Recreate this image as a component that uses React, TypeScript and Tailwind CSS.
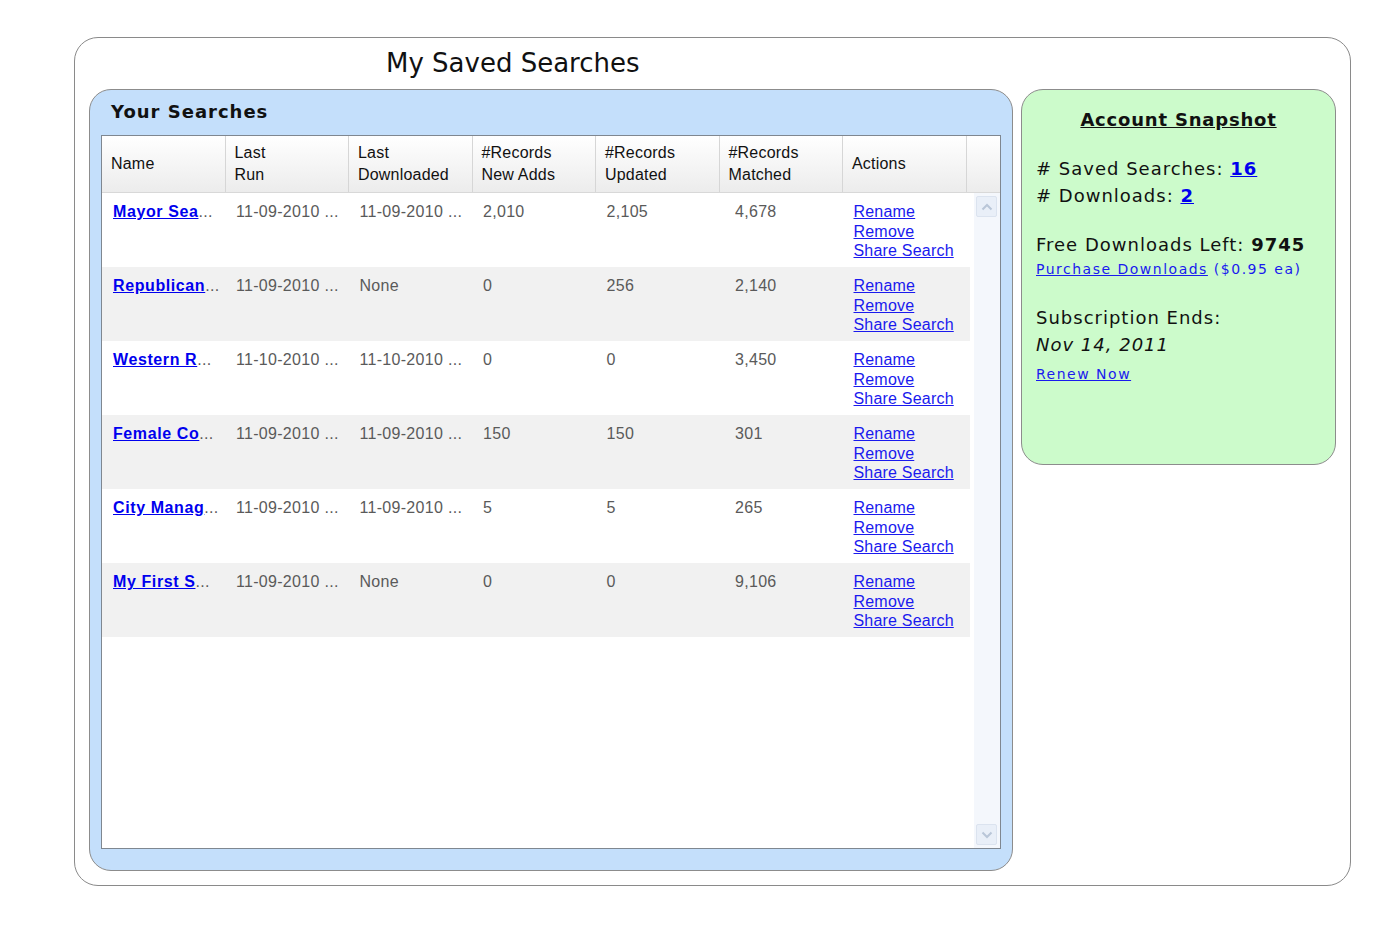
const rows = [
  { name: 'Mayor Sea', run: '11-09-2010 ...', dl: '11-09-2010 ...', adds: '2,010', upd: '2,105', match: '4,678' },
  { name: 'Republican', run: '11-09-2010 ...', dl: 'None', adds: '0', upd: '256', match: '2,140' },
  { name: 'Western R', run: '11-10-2010 ...', dl: '11-10-2010 ...', adds: '0', upd: '0', match: '3,450' },
  { name: 'Female Co', run: '11-09-2010 ...', dl: '11-09-2010 ...', adds: '150', upd: '150', match: '301' },
  { name: 'City Manag', run: '11-09-2010 ...', dl: '11-09-2010 ...', adds: '5', upd: '5', match: '265' },
  { name: 'My First S', run: '11-09-2010 ...', dl: 'None', adds: '0', upd: '0', match: '9,106' },
];

const headers = [
  ['Name'],
  ['Last', 'Run'],
  ['Last', 'Downloaded'],
  ['#Records', 'New Adds'],
  ['#Records', 'Updated'],
  ['#Records', 'Matched'],
  ['Actions'],
];

const verdana = { fontFamily: '"DejaVu Sans", Verdana, sans-serif' };

const Chevron = ({ down }: { down?: boolean }) => (
  <svg width="12" height="8" viewBox="0 0 12 8">
    <path
      d={down ? 'M1.5 1.5 L6 6 L10.5 1.5' : 'M1.5 6.5 L6 2 L10.5 6.5'}
      fill="none"
      stroke="#b9c6d8"
      strokeWidth="2"
    />
  </svg>
);

export default function App() {
  return (
    <div className="min-h-screen bg-white pt-[37px] pl-[74px]" style={verdana}>
      <div className="w-[1277px] h-[849px] border border-[#8a8a8a] rounded-[24px] bg-white px-[14px] pb-[14px] flex flex-col">
        <div className="h-[51px] flex items-end pb-[13px] pl-[297px] text-[26px] text-[#111] leading-none">
          My Saved Searches
        </div>
        <div className="flex gap-[8px] items-start">
          {/* Your searches panel */}
          <div className="w-[924px] h-[782px] rounded-[22px] border border-[#8c8c8c] bg-[#c4dffb] flex flex-col px-[11px]">
            <div className="h-[45px] flex items-center pb-[3px] pl-[10px] text-[18px] font-bold text-[#111] tracking-[1px]">
              Your Searches
            </div>
            <div
              className="h-[714px] border border-[#7f8790] bg-white flex flex-col"
              style={{ fontFamily: '"Liberation Sans", Tahoma, Arial, sans-serif' }}
            >
              <div className="h-[57px] flex border-b border-[#d8d8d8] bg-gradient-to-b from-white to-[#ececec] text-[16px] tracking-[0.2px] text-[#111] leading-[22px] shrink-0">
                {headers.map((h, i) => (
                  <div
                    key={i}
                    className="w-[123.5px] shrink-0 border-r border-[#d6d6d6] flex flex-col justify-center pl-[9px]"
                  >
                    {h.map((l) => (
                      <span key={l}>{l}</span>
                    ))}
                  </div>
                ))}
                <div className="flex-1" />
              </div>
              <div className="flex-1 flex">
                <div className="w-[869px]">
                  {rows.map((r, i) => (
                    <div
                      key={r.name}
                      className={`h-[74px] flex text-[16px] tracking-[0.3px] leading-[19.5px] text-[#5a5a5a] pt-[9px] ${i % 2 ? 'bg-[#f1f1f1]' : 'bg-white'}`}
                    >
                      <div className="w-[124px] shrink-0 pl-[11px] whitespace-nowrap overflow-hidden">
                        <a href="#" className="font-bold text-[#0000ee] underline tracking-[0.6px]">{r.name}</a>
                        <span>...</span>
                      </div>
                      <div className="w-[123.5px] shrink-0 pl-[10px]">{r.run}</div>
                      <div className="w-[123.5px] shrink-0 pl-[10px]">{r.dl}</div>
                      <div className="w-[123.5px] shrink-0 pl-[10px]">{r.adds}</div>
                      <div className="w-[123.5px] shrink-0 pl-[10px]">{r.upd}</div>
                      <div className="w-[123.5px] shrink-0 pl-[15px]">{r.match}</div>
                      <div className="w-[123.5px] shrink-0 pl-[10px] flex flex-col tracking-[0.2px]">
                        <a href="#" className="text-[#1a1aee] underline">Rename</a>
                        <a href="#" className="text-[#1a1aee] underline">Remove</a>
                        <a href="#" className="text-[#1a1aee] underline">Share Search</a>
                      </div>
                    </div>
                  ))}
                </div>
                <div className="ml-[4px] w-[26px] bg-[#f4f7fc] flex flex-col justify-between py-[3px] pl-[2px]">
                  <div className="w-[21px] h-[21px] bg-[#e9eff8] border border-[#dbe3ef] rounded-[2px] flex items-center justify-center">
                    <Chevron />
                  </div>
                  <div className="w-[21px] h-[21px] bg-[#e9eff8] border border-[#dbe3ef] rounded-[2px] flex items-center justify-center">
                    <Chevron down />
                  </div>
                </div>
              </div>
            </div>
          </div>

          {/* Account snapshot */}
          <div className="w-[315px] h-[376px] rounded-[22px] border border-[#8c8c8c] bg-[#ccfbcb] px-[14px] text-[#111]">
            <div className="pt-[16px] text-center">
              <span className="text-[18px] font-bold underline tracking-[0.8px]">Account Snapshot</span>
            </div>
            <div className="mt-[22px] text-[18px] leading-[27px] tracking-[1px]">
              <div>
                # Saved Searches:{' '}
                <a href="#" className="font-bold text-[#0000ee] underline">16 </a>
              </div>
              <div>
                # Downloads:{' '}
                <a href="#" className="font-bold text-[#0000ee] underline">2 </a>
              </div>
            </div>
            <div className="mt-[22px] text-[18px] leading-[27px] tracking-[1px]">
              Free Downloads Left: <span className="font-bold">9745</span>
            </div>
            <div className="text-[14px] leading-[22px] tracking-[1.5px] text-[#1a1aee]">
              <a href="#" className="underline">Purchase Downloads</a> ($0.95 ea)
            </div>
            <div className="mt-[24px] text-[18px] leading-[27px] tracking-[1px]">Subscription Ends:</div>
            <div className="text-[18px] leading-[27px] italic tracking-[1px]">Nov 14, 2011</div>
            <div className="mt-[6px] text-[14px] leading-[20px] tracking-[1.5px]">
              <a href="#" className="text-[#1a1aee] underline">Renew Now</a>
            </div>
          </div>
        </div>
      </div>
    </div>
  );
}
